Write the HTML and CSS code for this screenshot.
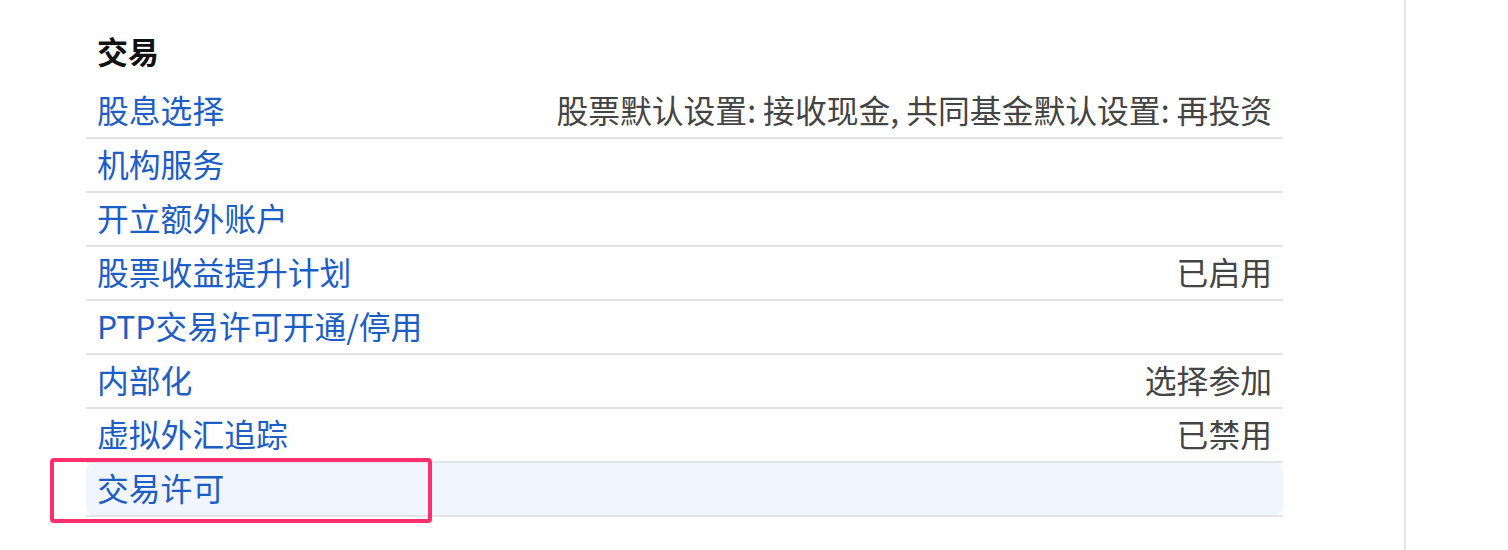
FILE: index.html
```html
<!DOCTYPE html>
<html lang="zh-CN">
<head>
<meta charset="utf-8">
<title>交易</title>
<link rel="stylesheet" href="styles.css">
</head>
<body>
<div class="page">
  <main class="main">
    <section class="section">
      <h2 class="section-title">交易</h2>
      <ul class="list">
        <li class="row"><div class="row-inner"><a class="row-link">股息选择</a><span class="row-value">股票默认设置: 接收现金, 共同基金默认设置: 再投资</span></div></li>
        <li class="row"><div class="row-inner"><a class="row-link">机构服务</a></div></li>
        <li class="row"><div class="row-inner"><a class="row-link">开立额外账户</a></div></li>
        <li class="row"><div class="row-inner"><a class="row-link">股票收益提升计划</a><span class="row-value">已启用</span></div></li>
        <li class="row"><div class="row-inner"><a class="row-link">PTP交易许可开通/停用</a></div></li>
        <li class="row"><div class="row-inner"><a class="row-link">内部化</a><span class="row-value">选择参加</span></div></li>
        <li class="row"><div class="row-inner"><a class="row-link">虚拟外汇追踪</a><span class="row-value">已禁用</span></div></li>
        <li class="row row-active"><div class="row-inner"><a class="row-link">交易许可</a></div><span class="callout"></span></li>
      </ul>
    </section>
  </main>
  <aside class="side"></aside>
</div>
</body>
</html>
```
FILE: styles.css
```css
html, body {
  margin: 0;
  padding: 0;
  background: #ffffff;
}
body {
  font-family: "Noto Sans CJK SC", "Noto Sans", "Liberation Sans", sans-serif;
  overflow: hidden;
}
.page {
  display: flex;
  height: 550px;
}
.main {
  width: 1404px;
  flex: none;
}
.side {
  flex: 1;
  border-left: 2px solid #e6e6e6;
}
.section {
  width: 1197px;
  margin-left: 86px;
  padding-top: 25px;
}
.section-title {
  margin: 0 0 8px 0;
  padding-left: 11px;
  font-size: 31px;
  line-height: 52px;
  font-weight: 700;
  color: #111111;
}
.list {
  list-style: none;
  margin: 0;
  padding: 0;
}
.row {
  position: relative;
  border-bottom: 2px solid #e4e4e4;
}
.row-inner {
  display: flex;
  justify-content: space-between;
  align-items: center;
  box-sizing: border-box;
  height: 52px;
  padding: 0 11px 4px 11px;
  border-radius: 8px;
}
.row-active .row-inner {
  background: #f1f5fd;
}
.row-link {
  font-size: 31.8px;
  color: #1c5dc6;
  text-decoration: none;
  white-space: nowrap;
}
.row-value {
  font-size: 31.8px;
  color: #444444;
  white-space: nowrap;
}
.callout {
  position: absolute;
  left: -36px;
  top: -5px;
  width: 374px;
  height: 57px;
  border: 4px solid #ff2f6d;
  border-radius: 4px;
}
```
